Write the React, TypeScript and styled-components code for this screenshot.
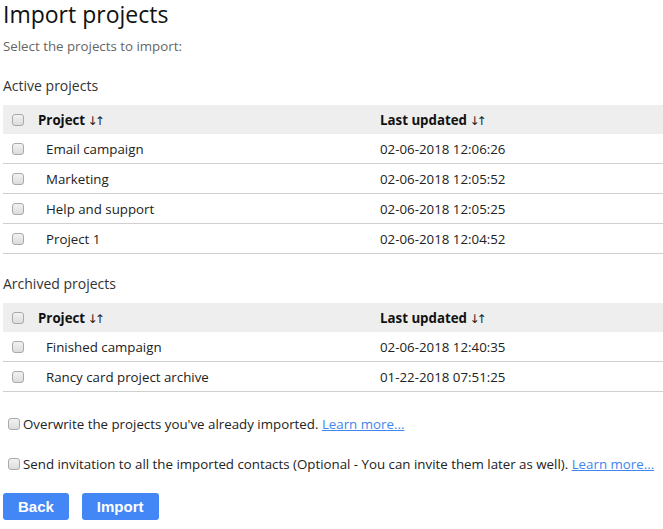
import styled, { createGlobalStyle } from "styled-components";

const GlobalStyle = createGlobalStyle`
  body {
    margin: 0;
    font-family: "Open Sans", "Noto Sans", sans-serif;
    color: #222;
    background: #fff;
  }
`;

interface Project {
  name: string;
  updated: string;
}

const active: Project[] = [
  { name: "Email campaign", updated: "02-06-2018 12:06:26" },
  { name: "Marketing", updated: "02-06-2018 12:05:52" },
  { name: "Help and support", updated: "02-06-2018 12:05:25" },
  { name: "Project 1", updated: "02-06-2018 12:04:52" },
];

const archived: Project[] = [
  { name: "Finished campaign", updated: "02-06-2018 12:40:35" },
  { name: "Rancy card project archive", updated: "01-22-2018 07:51:25" },
];

function ProjectTable({ rows }: { rows: Project[] }) {
  return (
    <Table>
      <HeadRow>
        <CheckCell>
          <Check type="checkbox" />
        </CheckCell>
        <div>
          Project <Arrows>↓↑</Arrows>
        </div>
        <div>
          Last updated <Arrows>↓↑</Arrows>
        </div>
      </HeadRow>
      {rows.map((r) => (
        <Row key={r.name}>
          <CheckCell>
            <Check type="checkbox" />
          </CheckCell>
          <NameCell>{r.name}</NameCell>
          <div>{r.updated}</div>
        </Row>
      ))}
    </Table>
  );
}

export default function App(): JSX.Element {
  return (
    <>
      <GlobalStyle />
      <Page>
        <Title>Import projects</Title>
        <Subtitle>Select the projects to import:</Subtitle>

        <SectionTitle>Active projects</SectionTitle>
        <ProjectTable rows={active} />

        <SectionTitle>Archived projects</SectionTitle>
        <ProjectTable rows={archived} />

        <Option $top={23}>
          <Check type="checkbox" />
          <span>
            Overwrite the projects you've already imported.{" "}
            <Link href="#">Learn more...</Link>
          </span>
        </Option>
        <Option $top={22}>
          <Check type="checkbox" />
          <span>
            Send invitation to all the imported contacts (Optional - You can
            invite them later as well). <Link href="#">Learn more...</Link>
          </span>
        </Option>

        <Buttons>
          <Button>Back</Button>
          <Button>Import</Button>
        </Buttons>
      </Page>
    </>
  );
}

const Page = styled.div`
  padding: 1px 0 0 3px;
`;

const Title = styled.h1`
  margin: 0;
  font-size: 23px;
  font-weight: 400;
  line-height: 27px;
  color: #111;
`;

const Subtitle = styled.p`
  margin: 8px 0 0;
  font-size: 13.3px;
  line-height: 20px;
  color: #666;
`;

const SectionTitle = styled.h2`
  margin: 20px 0 9px;
  font-size: 14px;
  font-weight: 500;
  line-height: 20px;
  color: #333;
`;

const Table = styled.div`
  display: flex;
  flex-direction: column;
  font-size: 13.3px;
`;

const HeadRow = styled.div`
  display: grid;
  grid-template-columns: 35px 342px 1fr;
  align-items: center;
  height: 29px;
  background: #eeeeee;
  font-weight: 700;
  color: #111;
`;

const Row = styled(HeadRow)`
  background: #fff;
  font-weight: 400;
  color: #222;
  border-bottom: 1px solid #cfcfcf;
`;

const CheckCell = styled.div`
  display: flex;
  align-items: center;
  padding-left: 9px;
`;

const NameCell = styled.div`
  padding-left: 8px;
`;

const Arrows = styled.span`
  font-family: "DejaVu Sans", sans-serif;
  font-size: 12px;
  font-weight: 400;
  letter-spacing: -3px;
  margin-left: -1px;
  color: #222;
`;

const Check = styled.input`
  appearance: none;
  margin: 0;
  width: 12px;
  height: 12px;
  border: 1px solid #a9a9a9;
  border-radius: 3px;
  background: linear-gradient(#f2f2f2, #dcdcdc);
  flex-shrink: 0;
`;

const Option = styled.label<{ $top: number }>`
  display: flex;
  align-items: center;
  gap: 3px;
  margin-top: ${(p) => p.$top}px;
  padding-left: 5px;
  font-size: 13.3px;
  line-height: 18px;
  color: #222;
`;

const Link = styled.a`
  color: #3f86ef;
  text-decoration: underline;
`;

const Buttons = styled.div`
  display: flex;
  gap: 13px;
  margin-top: 20px;
`;

const Button = styled.button`
  height: 27px;
  padding: 0 15px;
  border: none;
  border-radius: 3px;
  background: #4287f5;
  color: #fff;
  font-family: "Liberation Sans", Arial, sans-serif;
  font-size: 15px;
  font-weight: 700;
`;
